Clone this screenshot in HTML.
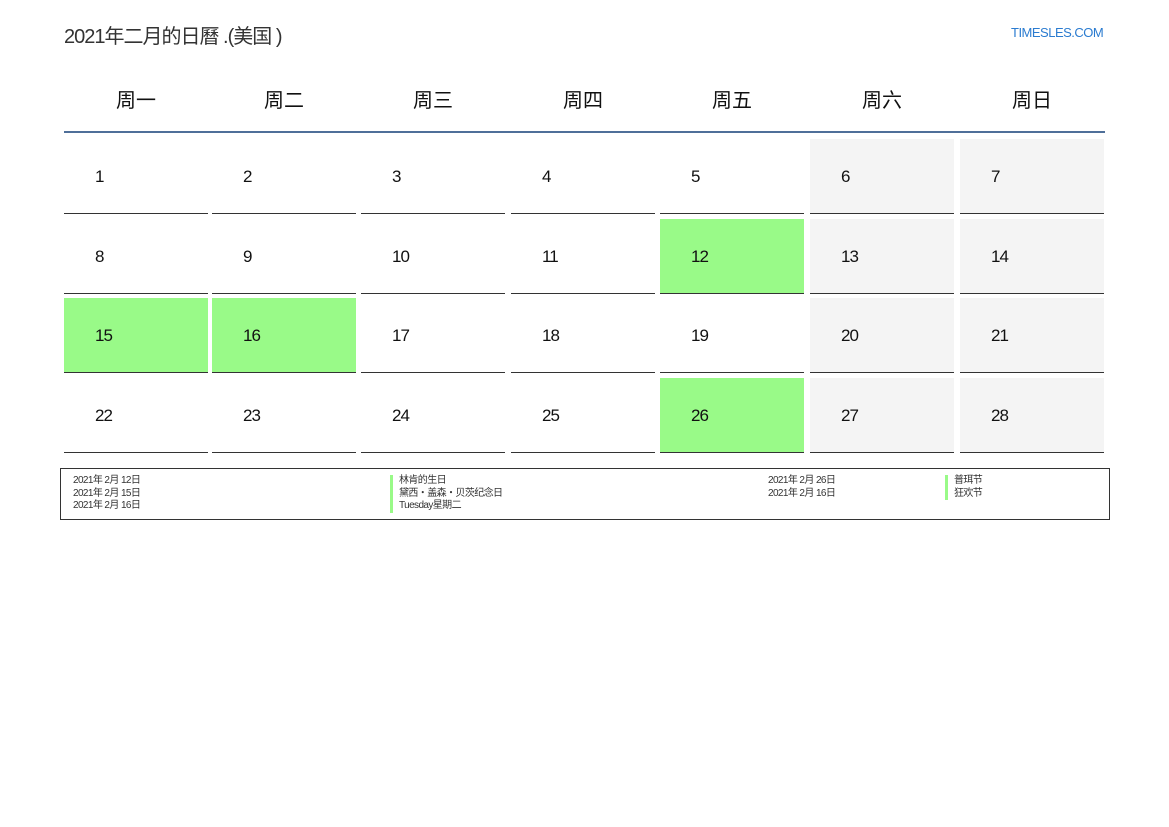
<!DOCTYPE html><html><head><meta charset="utf-8"><style>
body{margin:0;width:1169px;height:827px;background:#fff;position:relative;font-family:"Liberation Sans","Noto Sans CJK SC",sans-serif;overflow:hidden}
.a{position:absolute}
.h{position:absolute;top:84px;width:144px;text-align:center;font-size:20px;color:#111}
.c{position:absolute;width:144px;height:74px;border-bottom:1px solid #333}
.c span{position:absolute;left:31px;top:28px;font-size:17px;color:#111;letter-spacing:-1px}
.g{background:#f4f4f4}.v{background:#99fa88}
.s{font-size:10px;color:#333;position:absolute;line-height:12.5px;letter-spacing:-.6px}
.b{border-left:3px solid #99fa88;padding-left:6px;display:block}
</style></head><body>
<div class="a" style="left:64px;top:20px;font-size:20px;color:#333;letter-spacing:-1px">2021年二月的日曆 .(美国 )</div>
<div class="a" style="left:1011px;top:25px;font-size:13px;color:#2a7bd0;letter-spacing:-.5px">TIMESLES.COM</div>
<div class="h" style="left:64px">周一</div><div class="h" style="left:212px">周二</div><div class="h" style="left:361px">周三</div><div class="h" style="left:511px">周四</div><div class="h" style="left:660px">周五</div><div class="h" style="left:810px">周六</div><div class="h" style="left:960px">周日</div>
<div class="a" style="left:64px;top:131px;width:1041px;height:2px;background:#4f6f99"></div>
<div id="grid"></div>
<div class="a" style="left:60px;top:468px;width:1048px;height:50px;border:1px solid #333"></div>
<div class="s" style="left:73px;top:475px">2021年 2月 12日<br>2021年 2月 15日<br>2021年 2月 16日</div>
<div class="s" style="left:390px;top:475px"><span class="b">林肯的生日</span><span class="b">黛西・盖森・贝茨纪念日</span><span class="b">Tuesday星期二</span></div>
<div class="s" style="left:768px;top:475px">2021年 2月 26日<br>2021年 2月 16日</div>
<div class="s" style="left:945px;top:475px"><span class="b">普珥节</span><span class="b">狂欢节</span></div>
<script>
var xs=[64,212,361,511,660,810,960],ys=[139,219,298,378],h='',green={12:1,15:1,16:1,26:1};
for(var d=1;d<=28;d++){var c=(d-1)%7,r=Math.floor((d-1)/7);var cl=green[d]?'v':(c>=5?'g':'');
h+='<div class="c '+cl+'" style="left:'+xs[c]+'px;top:'+ys[r]+'px"><span>'+d+'</span></div>';}
document.getElementById('grid').innerHTML=h;
</script>
</body></html>
